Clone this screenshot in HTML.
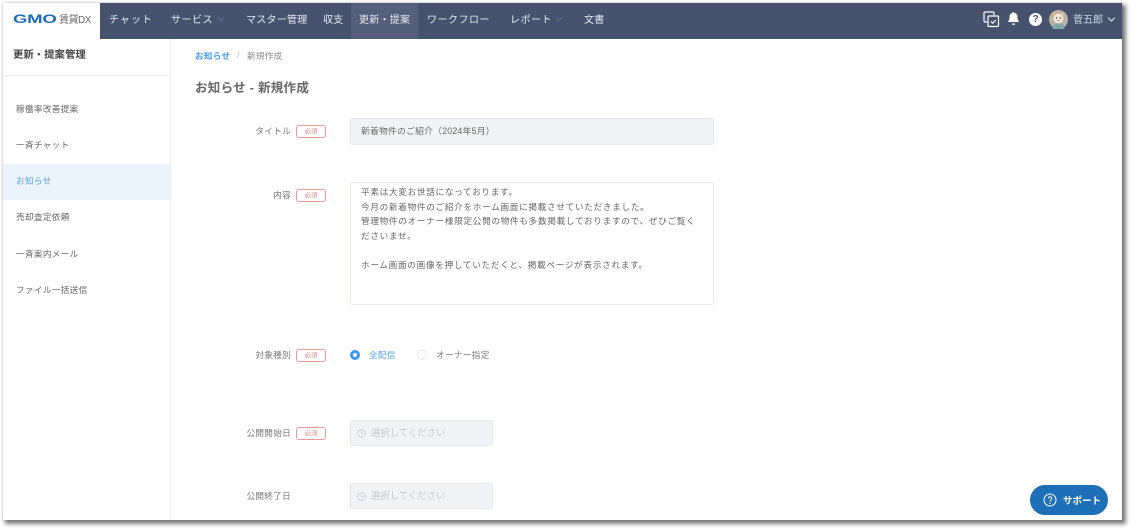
<!DOCTYPE html>
<html lang="ja"><head><meta charset="utf-8">
<style>
html,body{margin:0;padding:0;width:1134px;height:529px;overflow:hidden;background:#fff}
body{font-family:"Liberation Sans","Noto Sans CJK JP",sans-serif;position:relative}
#win{position:absolute;left:3px;top:3px;width:1119px;height:517px;background:#fff;box-shadow:3px 3px 4px 1px rgba(0,0,0,.5),0 0 3px rgba(0,0,0,.2);overflow:hidden}
#c{position:absolute;left:0;top:0;width:1134px;height:529px;filter:blur(.35px)}
.t{position:absolute;white-space:nowrap;line-height:14px}
.b{position:absolute}
.nav{color:#e6e9ef;font-size:10px;letter-spacing:.25px;top:14px}
.side{color:#666;font-size:8.6px;letter-spacing:.35px;left:16px}
.lab{color:#777;font-size:8.6px;letter-spacing:.3px;text-align:right;width:100px;left:191px}
.req{position:absolute;left:296px;width:28px;height:11px;border:1px solid #e89a9a;border-radius:3px;color:#e58a8a;font-size:6.5px;line-height:11px;text-align:center}
.inp{position:absolute;left:350px;background:#f2f3f7;border:1px solid #e6e8ee;border-radius:3px;box-sizing:border-box}
.ta{color:#666;font-size:8.6px;letter-spacing:.72px;left:361px}
.ph{color:#c3c6ce;font-size:9.4px;left:371px}
</style></head><body>
<div id="win"></div>
<div id="c">
<!-- header -->
<div class="b" style="left:100px;top:3px;width:1022px;height:36px;background:#47536e"></div>
<div class="b" style="left:351px;top:3px;width:67px;height:36px;background:#555f7b"></div>
<!-- logo -->
<div class="t" style="left:13px;top:13px;color:#1c6cb8;font-size:11.5px;font-weight:700;letter-spacing:-.2px;transform:scaleX(1.62);transform-origin:left">GMO</div>
<div class="t" style="left:59px;top:14px;color:#666;font-size:10px;letter-spacing:-.5px">賃貸DX</div>
<div class="t nav" style="left:109px;letter-spacing:1px">チャット</div>
<div class="t nav" style="left:171px;letter-spacing:.5px">サービス</div>
<svg class="b" style="left:217px;top:16px" width="8" height="6"><path d="M1 1.500l3 3 3-3" fill="none" stroke="#6d7890" stroke-width=".8"/></svg>
<div class="t nav" style="left:246px">マスター管理</div>
<div class="t nav" style="left:323px">収支</div>
<div class="t nav" style="left:359px">更新・提案</div>
<div class="t nav" style="left:427px;letter-spacing:.5px">ワークフロー</div>
<div class="t nav" style="left:510px;letter-spacing:.5px">レポート</div>
<svg class="b" style="left:555px;top:16px" width="8" height="6"><path d="M1 1.500l3 3 3-3" fill="none" stroke="#6d7890" stroke-width=".8"/></svg>
<div class="t nav" style="left:584px">文書</div>
<!-- header icons -->
<svg class="b" style="left:983px;top:11px" width="17" height="17" viewBox="0 0 17 17" fill="none" stroke="#fff" stroke-width="1.200"><path d="M4 11H2a1 1 0 0 1-1-1V2a1 1 0 0 1 1-1h8a1 1 0 0 1 1 1v2"/><rect x="5" y="5" width="10.500" height="10.500" rx="1"/><path d="M8 10.500l1.700 1.700 3-3"/></svg>
<svg class="b" style="left:1007px;top:11px" width="13" height="15" viewBox="0 0 13 15"><path d="M6.500 1c.6 0 1 .4 1 .9 2 .5 3 2 3 4.100 0 2.500.5 3.800 1.800 5H.7C2 9.800 2.500 8.500 2.500 6c0-2.100 1-3.600 3-4.100 0-.5.400-.9 1-.9zM5 12.500h3a1.500 1.500 0 0 1-3 0z" fill="#fff"/></svg>
<div class="b" style="left:1029px;top:13px;width:13px;height:13px;border-radius:50%;background:#fff;color:#47536e;font-size:10px;font-weight:700;line-height:13px;text-align:center">?</div>
<svg class="b" style="left:1049px;top:10px" width="19" height="19" viewBox="0 0 19 19"><circle cx="9.500" cy="9.500" r="9.500" fill="#b9b3a6"/><path d="M4.500 3l2 4M14.500 3l-2 4" stroke="#e8b980" stroke-width="2.500"/><ellipse cx="9.500" cy="8.500" rx="5" ry="5" fill="#f2e6d8"/><path d="M3.500 19c0-4 3-5.500 6-5.500s6 1.500 6 5.500z" fill="#7fa8a8"/><circle cx="7.500" cy="8" r=".7" fill="#444"/><circle cx="11.500" cy="8" r=".7" fill="#444"/><path d="M8.500 10.500h2" stroke="#c55" stroke-width=".8"/></svg>
<div class="t" style="left:1073px;top:14px;color:#cfd5e0;font-size:10px">菅五郎</div>
<svg class="b" style="left:1107px;top:16px" width="9" height="7"><path d="M1 1.500l3.500 3.500L8 1.500" fill="none" stroke="#dfe3ea" stroke-width="1"/></svg>
<!-- sidebar -->
<div class="b" style="left:170px;top:39px;width:1px;height:481px;background:#eceef2"></div>
<div class="b" style="left:3px;top:75px;width:167px;height:1px;background:#eceef2"></div>
<div class="t" style="left:13px;top:49px;color:#444;font-size:10.400px;font-weight:700">更新・提案管理</div>
<div class="b" style="left:3px;top:164px;width:167px;height:36px;background:#ebf3fd"></div>
<div class="t side" style="top:102px">稼働率改善提案</div>
<div class="t side" style="top:138px">一斉チャット</div>
<div class="t side" style="top:174px;color:#5a9ee8">お知らせ</div>
<div class="t side" style="top:210px">売却査定依頼</div>
<div class="t side" style="top:247px">一斉案内メール</div>
<div class="t side" style="top:283px">ファイル一括送信</div>
<!-- breadcrumb -->
<div class="t" style="left:195px;top:49px;color:#4a9bf0;font-size:8.600px;font-weight:700;letter-spacing:.3px">お知らせ</div>
<div class="t" style="left:237px;top:49px;color:#c0c4cc;font-size:9.500px">/</div>
<div class="t" style="left:247px;top:49px;color:#888;font-size:8.600px;letter-spacing:.3px">新規作成</div>
<div class="t" style="left:195px;top:81px;color:#666;font-size:12.500px;font-weight:700;letter-spacing:.3px">お知らせ - 新規作成</div>
<!-- form -->
<div class="t lab" style="top:124px">タイトル</div><div class="req" style="top:125px">必須</div>
<div class="inp" style="top:118px;width:364px;height:27px"></div>
<div class="t" style="left:361px;top:124px;color:#666;font-size:8.800px;letter-spacing:.22px">新着物件のご紹介（2024年5月）</div>
<div class="t lab" style="top:188px">内容</div><div class="req" style="top:189px">必須</div>
<div class="inp" style="top:182px;width:364px;height:123px;background:#fff;border-color:#e6e8ee"></div>
<div class="t ta" style="top:185px">平素は大変お世話になっております。</div>
<div class="t ta" style="top:200px">今月の新着物件のご紹介をホーム画面に掲載させていただきました。</div>
<div class="t ta" style="top:214px">管理物件のオーナー様限定公開の物件も多数掲載しておりますので、ぜひご覧く</div>
<div class="t ta" style="top:229px">ださいませ。</div>
<div class="t ta" style="top:258px">ホーム画面の画像を押していただくと、掲載ページが表示されます。</div>
<div class="t lab" style="top:348px">対象種別</div><div class="req" style="top:349px">必須</div>
<div class="b" style="left:350px;top:350px;width:10px;height:10px;border-radius:50%;background:#3a98f5"></div>
<div class="b" style="left:353px;top:353px;width:4px;height:4px;border-radius:50%;background:#fff"></div>
<div class="t" style="left:369px;top:348px;color:#5aa5f0;font-size:8.600px;letter-spacing:.3px">全配信</div>
<div class="b" style="left:417px;top:350px;width:8px;height:8px;border-radius:50%;border:1px solid #e6e8ee"></div>
<div class="t" style="left:436px;top:348px;color:#777;font-size:8.600px;letter-spacing:.35px">オーナー指定</div>
<div class="t lab" style="top:426px">公開開始日</div><div class="req" style="top:427px">必須</div>
<div class="inp" style="top:420px;width:143px;height:26px"></div>
<svg class="b" style="left:357px;top:429px" width="9" height="9" viewBox="0 0 9 9" fill="none" stroke="#c3c6ce" stroke-width=".8"><circle cx="4.500" cy="4.500" r="3.800"/><path d="M4.500 2.300v2.300h2"/></svg>
<div class="t ph" style="top:426px">選択してください</div>
<div class="t lab" style="top:489px">公開終了日</div>
<div class="inp" style="top:483px;width:143px;height:26px"></div>
<svg class="b" style="left:357px;top:492px" width="9" height="9" viewBox="0 0 9 9" fill="none" stroke="#c3c6ce" stroke-width=".8"><circle cx="4.500" cy="4.500" r="3.800"/><path d="M4.500 2.300v2.300h2"/></svg>
<div class="t ph" style="top:489px">選択してください</div>
<!-- support -->
<div class="b" style="left:1030px;top:485px;width:78px;height:30px;border-radius:15px;background:#1d6fb8"></div>
<svg class="b" style="left:1043px;top:493px" width="14" height="14" viewBox="0 0 14 14"><circle cx="7" cy="7" r="6" fill="none" stroke="#fff" stroke-width="1"/><path d="M5.200 5.500a1.800 1.800 0 1 1 2.700 1.600c-.6.300-.9.700-.9 1.300" fill="none" stroke="#fff" stroke-width="1"/><circle cx="7" cy="10.200" r=".7" fill="#fff"/></svg>
<div class="t" style="left:1063px;top:495px;color:#fff;font-size:9.500px;font-weight:700">サポート</div>
</div>
</body></html>
